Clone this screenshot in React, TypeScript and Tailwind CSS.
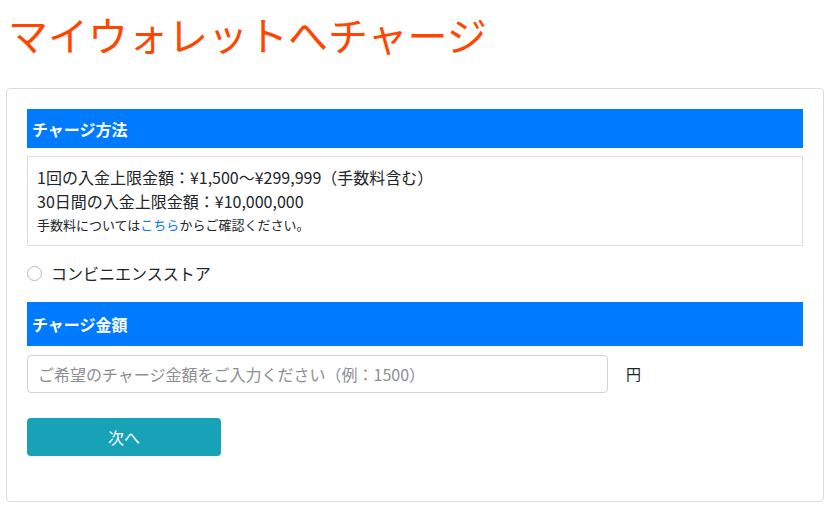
export default function App() {
  return (
    <div className="min-h-screen bg-white font-['Noto_Sans_CJK_JP','Noto_Sans',sans-serif] text-[#212529]">
      <h1 className="pl-2 pt-[10px] text-[40px] leading-[48px] font-normal text-[#ff4500]">
        マイウォレットへチャージ
      </h1>
      <div className="mx-[6px] mt-[30px] w-[818px] rounded border border-[#dcdcdc] px-5 pt-5 pb-[45px]">
        {/* Method */}
        <div className="flex h-[39px] items-center bg-[#007bff] px-[5px] text-[16px] font-bold text-white">
          チャージ方法
        </div>
        <div className="mt-2 border border-[#dedede] px-[9px] py-2">
          <p className="text-[16px] leading-6">1回の入金上限金額：¥1,500〜¥299,999（手数料含む）</p>
          <p className="text-[16px] leading-6">30日間の入金上限金額：¥10,000,000</p>
          <p className="text-[13px] leading-6">
            手数料については<span className="text-[#007bff]">こちら</span>からご確認ください。
          </p>
        </div>
        <label className="mt-[15px] mb-[17px] flex h-6 items-center gap-[9px]">
          <span className="h-[15px] w-[15px] rounded-full border border-[#b5b9bd] bg-white" />
          <span className="text-[16px]">コンビニエンスストア</span>
        </label>
        {/* Amount */}
        <div className="flex h-[44px] items-center bg-[#007bff] px-[5px] text-[16px] font-bold text-white">
          チャージ金額
        </div>
        <div className="mt-[9px] flex items-center gap-[18px]">
          <input
            className="h-[38px] w-[581px] rounded border border-[#ced4da] px-[10px] text-[16px] outline-none placeholder:text-[#8a8f94]"
            placeholder="ご希望のチャージ金額をご入力ください（例：1500）"
          />
          <span className="text-[15px]">円</span>
        </div>
        <button className="mt-[25px] flex h-[38px] w-[194px] items-center justify-center rounded bg-[#17a2b8] text-[16px] text-white">
          次へ
        </button>
      </div>
    </div>
  );
}
